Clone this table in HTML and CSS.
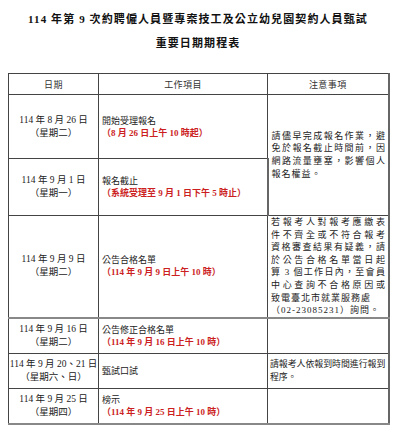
FILE: index.html
```html
<!DOCTYPE html>
<html lang="zh-Hant">
<head>
<meta charset="utf-8">
<link rel="stylesheet" href="styles.css">
</head>
<body>
<div class="page">
  <div class="title">
    <div class="t1">114 年第 9 次約聘僱人員暨專案技工及公立幼兒園契約人員甄試</div>
    <div class="t2">重要日期期程表</div>
  </div>
  <table class="sched">
    <colgroup>
      <col class="c1"><col class="c2"><col class="c3">
    </colgroup>
    <thead>
      <tr class="hrow">
        <th>日期</th><th>工作項目</th><th>注意事項</th>
      </tr>
    </thead>
    <tbody>
      <tr class="r1">
        <td class="date">114 年 8 月 26 日<br>（星期二）</td>
        <td class="work">開始受理報名<br><span class="red">（8 月 26 日上午 10 時起）</span></td>
        <td class="note" rowspan="2">
          <div class="j">請儘早完成報名作業，避</div>
          <div class="j">免於報名截止時間前，因</div>
          <div class="j">網路流量壅塞，影響個人</div>
          <div>報名權益。</div>
        </td>
      </tr>
      <tr class="r2">
        <td class="date">114 年 9 月 1 日<br>（星期一）</td>
        <td class="work">報名截止<br><span class="red">（系統受理至 9 月 1 日下午 5 時止）</span></td>
      </tr>
      <tr class="r3">
        <td class="date">114 年 9 月 9 日<br>（星期二）</td>
        <td class="work">公告合格名單<br><span class="red">（114 年 9 月 9 日上午 10 時）</span></td>
        <td class="note">
          <div class="j">若報考人對報考應繳表</div>
          <div class="j">件不齊全或不符合報考</div>
          <div class="j">資格審查結果有疑義，請</div>
          <div class="j">於公告合格名單當日起</div>
          <div class="j">算 3 個工作日內，至會員</div>
          <div class="j">中心查詢不合格原因或</div>
          <div>致電臺北市就業服務處</div>
          <div>（02-23085231）詢問。</div>
        </td>
      </tr>
      <tr class="r4">
        <td class="date">114 年 9 月 16 日<br>（星期二）</td>
        <td class="work">公告修正合格名單<br><span class="red">（114 年 9 月 16 日上午 10 時）</span></td>
        <td class="note"></td>
      </tr>
      <tr class="r5">
        <td class="date">114 年 9 月 20、21 日<br>（星期六、日）</td>
        <td class="work">甄試口試</td>
        <td class="note small"><div class="nw">請報考人依報到時間進行報到</div><div>程序。</div></td>
      </tr>
      <tr class="r6">
        <td class="date">114 年 9 月 25 日<br>（星期四）</td>
        <td class="work">榜示<br><span class="red">（114 年 9 月 25 日上午 10 時）</span></td>
        <td class="note"></td>
      </tr>
    </tbody>
  </table>
</div>
</body>
</html>
```
FILE: styles.css
```css
html, body {
  margin: 0;
  padding: 0;
  background: #fff;
}
body {
  font-family: "Liberation Serif", "Noto Sans CJK TC", serif;
  color: #222;
}
.page {
  padding: 7px 0 0 8px;
  width: 380px;
}
.title {
  text-align: center;
  font-weight: bold;
  font-size: 11px;
  letter-spacing: 1.1px;
  line-height: 24px;
  color: #111;
}
.sched {
  margin-top: 18px;
  border-collapse: collapse;
  table-layout: fixed;
  width: 380px;
  font-size: 9px;
}
.c1 { width: 90px; }
.c2 { width: 169px; }
.c3 { width: 121px; }
.sched th, .sched td {
  border: 1px solid #444;
  padding: 0;
  vertical-align: middle;
}
.sched tbody tr:last-child td {
  border-bottom: 2px solid #888;
}
.sched td:last-child, .sched th:last-child {
  border-right: 2px solid #666;
}
.r3 td { border-bottom: 2px solid #888; }
.hrow { height: 21px; }
.hrow th {
  font-weight: normal;
  letter-spacing: 0.4px;
  text-align: center;
  color: #333;
}
.r1 { height: 64px; }
.r2 { height: 57px; }
.r3 { height: 102px; }
.r4 { height: 36px; }
.r5 { height: 35px; }
.r6 { height: 35px; }
.date {
  text-align: center;
  line-height: 13px;
  font-size: 9.5px;
}
.work {
  text-align: left;
  padding-left: 3px !important;
  line-height: 12px;
  color: #222;
}
.red {
  color: #cc1f1f;
  font-weight: bold;
}
.note {
  padding: 0 2px 0 3px !important;
  line-height: 12.6px;
  letter-spacing: 1px;
  color: #222;
}
.note .j {
  text-align: justify;
  text-align-last: justify;
  letter-spacing: 0.6px;
}
.note.small {
  padding: 0 1px 0 2px !important;
  letter-spacing: 0;
  line-height: 13.5px;
  font-size: 8.9px;
}
.nw {
  white-space: nowrap;
}
```
